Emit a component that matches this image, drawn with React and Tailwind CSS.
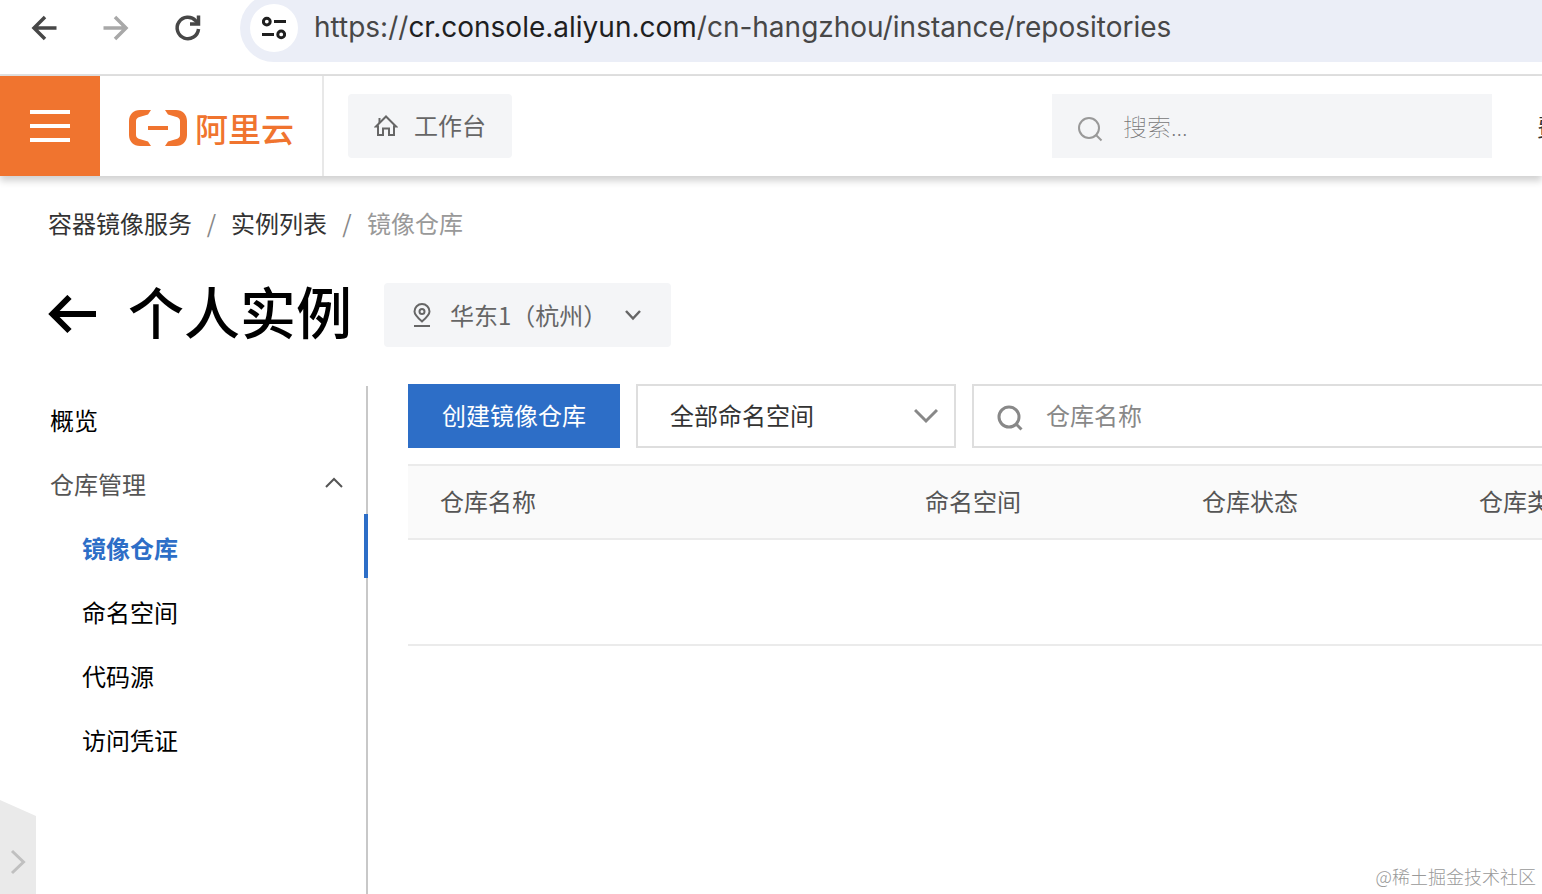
import React, { useState } from 'react';
import clsx from 'clsx';

const columns = [
  { key: 'name', label: '仓库名称', width: 'w-[485px]' },
  { key: 'namespace', label: '命名空间', width: 'w-[277px]' },
  { key: 'status', label: '仓库状态', width: 'w-[277px]' },
  { key: 'type', label: '仓库类型', width: 'w-[277px]' },
];

const subMenu = ['镜像仓库', '命名空间', '代码源', '访问凭证'];

const BrowserBar = () => (
  <div className="-mt-1.5 flex items-start border-b-2 border-[#e0e0e0] bg-white pb-3">
    <div className="flex h-[68px] w-60 shrink-0 items-center gap-10 pl-7">
      <button aria-label="Back" className="text-[#474747]">
        <svg className="h-8 w-8" viewBox="0 0 32 32" fill="none" stroke="currentColor" strokeWidth="3.500">
          <path d="M28.5 16H6M17 5L6 16L17 27" />
        </svg>
      </button>
      <button aria-label="Forward" className="text-[#a8a8a8]">
        <svg className="h-8 w-8" viewBox="0 0 32 32" fill="none" stroke="currentColor" strokeWidth="3.500">
          <path d="M3.5 16H26M15 5L26 16L15 27" />
        </svg>
      </button>
      <button aria-label="Reload" className="text-[#474747]">
        <svg className="h-8 w-8" viewBox="0 0 32 32" fill="none" stroke="currentColor" strokeWidth="3.500">
          <path d="M26.5 17A10.700 10.700 0 1 1 23.800 8.800L26 11" />
          <path d="M26.500 3.500V12H18" />
        </svg>
      </button>
    </div>
    <div className="flex h-[68px] min-w-0 flex-1 items-center gap-4 rounded-l-full bg-[#ebeef7] pl-2.5">
      <button aria-label="Site information" className="flex h-12 w-12 shrink-0 items-center justify-center rounded-full bg-white">
        <svg className="h-6 w-6" viewBox="0 0 24 24" fill="none" stroke="#1f1f1f" strokeWidth="3">
          <circle cx="4.8" cy="5.6" r="3.4" />
          <path d="M12 5.6H24M0 18.4H12" />
          <circle cx="19.2" cy="18.4" r="3.4" />
        </svg>
      </button>
      <span className="whitespace-nowrap font-['Inter',sans-serif] text-[28px] text-[#474747]">
        https://<span className="text-[#1f1f1f]">cr.console.aliyun.com</span>/cn-hangzhou/instance/repositories
      </span>
    </div>
  </div>
);

const SearchIcon = ({ strokeWidth }) => (
  <svg className="h-8 w-[26px] shrink-0" viewBox="0 -6 26 32" fill="none" stroke="currentColor" strokeWidth={strokeWidth}>
    <circle cx="12" cy="12" r="10" />
    <path d="M18.5 18.5L24.5 24.5" />
  </svg>
);

const Header = () => (
  <header className="relative flex h-[100px] items-center bg-white shadow-[0_5px_7px_rgba(0,0,0,0.18)]">
    <button aria-label="菜单" className="flex h-full w-[100px] shrink-0 flex-col items-center justify-center gap-2.5 bg-[#f0742f]">
      <span className="h-1 w-10 bg-white" />
      <span className="h-1 w-10 bg-white" />
      <span className="h-1 w-10 bg-white" />
    </button>
    <a href="#home" className="flex h-full w-56 shrink-0 items-center gap-2 border-r-2 border-[#e8e8e8] pl-[29px] pt-1 text-[#f0742f]">
      <svg className="h-9 w-[58px]" viewBox="0 0 58 36" fill="currentColor">
        <path d="M22 0H11C4.500 0 0 4.500 0 11V25C0 31.500 4.500 36 11 36H22L19 31.500L10.500 29C8.500 28.400 7 27 7 25V11C7 9 8.500 7.600 10.500 7L19 4.500Z" />
        <path d="M36 0H47C53.500 0 58 4.500 58 11V25C58 31.500 53.500 36 47 36H36L39 31.500L47.500 29C49.500 28.400 51 27 51 25V11C51 9 49.500 7.600 47.500 7L39 4.500Z" />
        <path d="M19 16H39V20H19Z" />
      </svg>
      <span className="whitespace-nowrap text-[33px] font-medium">阿里云</span>
    </a>
    <button className="ml-6 flex h-16 w-[164px] shrink-0 items-center gap-4 rounded bg-[#f4f5f7] pb-0.5 pl-[26px] text-[#666]">
      <svg className="h-6 w-6" viewBox="0 0 24 24" fill="none" stroke="currentColor" strokeWidth="2">
        <path d="M2 13.500L12 3.500L22 13.500H20V22H15V15.500H9V22H4V13.500H2Z" />
        <path d="M5.500 10V5" />
      </svg>
      工作台
    </button>
    <label className="ml-auto flex h-16 w-[440px] shrink-0 items-center gap-5 bg-[#f4f5f7] pl-[25px] text-[#999]">
      <SearchIcon strokeWidth="2" />
      <input
        type="text"
        aria-label="搜索"
        placeholder="搜索..."
        className="min-w-0 flex-1 bg-transparent font-thin outline-none placeholder:text-[#777]"
      />
    </label>
    <a href="#billing" className="w-[50px] shrink-0 overflow-hidden whitespace-nowrap pl-[45px] text-[#333]">费用</a>
  </header>
);

const Sidebar = () => {
  const [open, setOpen] = useState(true);
  const [active, setActive] = useState('镜像仓库');

  return (
    <nav className="mt-0.5 w-[368px] shrink-0 border-r-2 border-[#c8c8c8]">
      <a href="#overview" className="flex h-16 items-center pl-[50px] pt-1 text-black">概览</a>
      <button onClick={() => setOpen(!open)} className="flex h-16 w-full items-center justify-between pl-[50px] pr-[22px] pt-1 text-[#555]">
        仓库管理
        <svg className={clsx('h-5 w-5', !open && 'rotate-180')} viewBox="0 0 20 20" fill="none" stroke="currentColor" strokeWidth="2">
          <path d="M2 13L10 5L18 13" />
        </svg>
      </button>
      {open && subMenu.map((item) => (
        <a
          key={item}
          href={`#${item}`}
          onClick={() => setActive(item)}
          className={clsx(
            '-mr-0.5 flex h-16 items-center border-r-4 pl-[82px] pt-1',
            item === active ? 'border-[#2d6ec7] font-bold text-[#2d6ec7]' : 'border-transparent text-black'
          )}
        >
          {item}
        </a>
      ))}
    </nav>
  );
};

const Repositories = () => (
  <main className="min-w-0 flex-1 overflow-hidden pl-10">
    {/* Toolbar */}
    <div className="flex gap-4">
      <button className="h-16 w-[212px] shrink-0 bg-[#2d6ec7] pb-0.5 text-white">创建镜像仓库</button>
      <div className="relative w-80 shrink-0">
        <select aria-label="命名空间" className="h-16 w-full appearance-none border-2 border-[#dedede] bg-white pb-0.5 pl-8 text-[#333]">
          <option>全部命名空间</option>
        </select>
        <svg className="pointer-events-none absolute right-[18px] top-5 h-6 w-6" viewBox="0 0 24 24" fill="none" stroke="#888" strokeWidth="3">
          <path d="M1 6L12 17L23 6" />
        </svg>
      </div>
      <label className="flex h-16 min-w-0 flex-1 items-center gap-[23px] border-2 border-r-0 border-[#dedede] pb-0.5 pl-[23px] text-[#888]">
        <SearchIcon strokeWidth="3" />
        <input
          type="text"
          aria-label="仓库名称"
          placeholder="仓库名称"
          className="min-w-0 flex-1 bg-transparent outline-none placeholder:text-[#888]"
        />
      </label>
    </div>

    {/* Table */}
    <table className="mt-4 w-[1316px] table-fixed border-separate border-spacing-0">
      <thead>
        <tr className="bg-[#fafafa]">
          {columns.map((col) => (
            <th
              key={col.key}
              className={clsx('h-[76px] border-y-2 border-[#ebebeb] pb-0.5 pl-8 text-left font-normal text-[#555]', col.width)}
            >
              {col.label}
            </th>
          ))}
        </tr>
      </thead>
      <tbody>
        <tr>
          <td colSpan={columns.length} className="h-[106px] border-b-2 border-[#ebebeb]" />
        </tr>
      </tbody>
    </table>
  </main>
);

const App = () => {
  return (
    <div className="relative flex min-h-screen flex-col overflow-hidden bg-white font-['Noto_Sans_CJK_SC',sans-serif] text-2xl">
      <BrowserBar />
      <Header />

      <div className="flex h-24 items-center pb-0.5 pl-12 text-[#333]">
        <a href="#acr">容器镜像服务</a>
        <span className="w-[39px] text-center text-[#888]">/</span>
        <a href="#instances">实例列表</a>
        <span className="w-10 text-center text-[#888]">/</span>
        <span className="text-[#999]">镜像仓库</span>
      </div>

      <div className="mb-[37px] mt-[11px] flex h-16 items-center pl-12">
        <button aria-label="返回">
          <svg className="h-10 w-[50px]" viewBox="0 0 50 40" fill="none" stroke="#000" strokeWidth="6">
            <path d="M48 19H4.500M21.500 2L4.500 19L21.500 36" />
          </svg>
        </button>
        <h1 className="ml-[30px] pb-2.5 text-[56px] font-medium leading-none">个人实例</h1>
        <div className="relative ml-8 w-[287px]">
          <select aria-label="地域" className="h-16 w-full appearance-none rounded bg-[#f4f5f7] pl-[66px] text-[#666]">
            <option>华东1（杭州）</option>
          </select>
          <svg className="pointer-events-none absolute left-[26px] top-5 h-6 w-6" viewBox="0 0 24 24" fill="none" stroke="#666" strokeWidth="2">
            <path d="M12 18.500C8 15 4.500 12 4.500 8.500A7.500 7.500 0 0 1 19.500 8.500C19.500 12 16 15 12 18.500Z" />
            <circle cx="12" cy="8.500" r="2.500" />
            <path d="M4 23H20" />
          </svg>
          <svg className="pointer-events-none absolute right-7 top-[22px] h-5 w-5" viewBox="0 0 20 20" fill="none" stroke="#666" strokeWidth="2.500">
            <path d="M3 6L10 13.500L17 6" />
          </svg>
        </div>
      </div>

      <div className="flex flex-1">
        <Sidebar />
        <Repositories />
      </div>

      {/* Collapse handle */}
      <button aria-label="展开" className="absolute bottom-0 left-0 h-[94px] w-9">
        <svg className="h-full w-full" viewBox="0 0 36 94" fill="none">
          <path d="M0 0L36 16V94H0Z" fill="#eaeaea" />
          <path d="M12 51L23.500 62L12 73" stroke="#c0c0c0" strokeWidth="3" />
        </svg>
      </button>

      <span className="absolute bottom-1.5 right-1.5 text-lg font-light leading-6 text-[#999]">@稀土掘金技术社区</span>
    </div>
  );
};

export default App;
